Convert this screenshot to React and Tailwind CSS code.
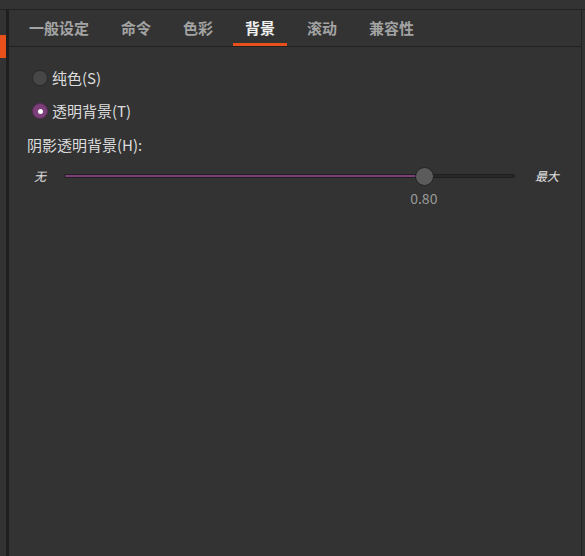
import React from 'react';

const tabs = ['一般设定', '命令', '色彩', '背景', '滚动', '兼容性'];

function Radio({ checked, label }) {
    return (
        <div className="flex items-center h-[20px] pl-[23px] gap-[4px]">
            {checked ? (
                <span className="w-[16px] h-[16px] rounded-full bg-[#7d3f7a] border border-[#5a2d58] flex items-center justify-center">
                    <span className="w-[5px] h-[5px] rounded-full bg-white"></span>
                </span>
            ) : (
                <span className="w-[16px] h-[16px] rounded-full bg-[#474747] border border-[#2a2a2a]"></span>
            )}
            <span className="text-[15px] text-[#dcdcdc]">{label}</span>
        </div>
    );
}

function Slider({ value }) {
    const pct = value * 100;
    return (
        <div className="flex flex-col">
            <div className="flex items-center h-[20px]">
                <span className="w-[55px] pl-[25px] text-[12px] italic text-[#e0e0e0]">无</span>
                <div className="relative w-[451px] h-[20px] flex items-center">
                    <div className="w-full h-[4px] rounded-full bg-[#272727] border border-[#1f1f1f] flex">
                        <div className="h-full rounded-full bg-[#7d3f7a]" style={{ width: `${pct}%` }}></div>
                    </div>
                    <div
                        className="absolute top-[1px] w-[19px] h-[19px] -ml-[10px] rounded-full bg-[#5b5b5b] border border-[#242424]"
                        style={{ left: `${pct}%` }}
                    ></div>
                </div>
                <span className="pl-[20px] text-[12px] italic text-[#e0e0e0]">最大</span>
            </div>
            <div className="relative ml-[55px] w-[451px] h-[26px]">
                <span
                    className="absolute top-[2px] -ml-[1px] -translate-x-1/2 text-[14px] text-[#9a9a9a]"
                    style={{ left: `${pct}%` }}
                >
                    {value.toFixed(2)}
                </span>
            </div>
        </div>
    );
}

export default function App() {
    return (
        <div
            className="w-[585px] h-[556px] bg-[#333333] flex flex-col overflow-hidden"
            style={{ fontFamily: '"Noto Sans CJK SC", "Noto Sans", sans-serif' }}
        >
            <div className="h-[9px] shrink-0"></div>
            <div className="flex flex-1 border-t border-[#222222]">
                {/* left strip */}
                <div className="w-[6px] shrink-0 pt-[25px]">
                    <div className="h-[23px] bg-[#e8501c]"></div>
                </div>
                <div className="w-[3px] shrink-0 bg-[#1f1f1f]"></div>

                {/* main panel */}
                <div className="w-[573px] flex flex-col border-r border-[#222222]">
                    <div className="flex h-[37px] border-b border-[#222222] pl-2 gap-[8px]">
                        {tabs.map((t) => (
                            <div
                                key={t}
                                className={
                                    t === '背景'
                                        ? 'px-[12px] pt-[7px] text-[15px] font-bold text-[#f0f0f0] border-b-[3px] border-[#e8501c]'
                                        : 'px-[12px] pt-[7px] text-[15px] font-bold text-[#a3a3a3]'
                                }
                            >
                                {t}
                            </div>
                        ))}
                    </div>

                    <div className="flex flex-col pt-[21px]">
                        <Radio label="纯色(S)" />
                        <div className="h-[13px]"></div>
                        <Radio checked label="透明背景(T)" />
                        <div className="h-[14px] "></div>
                        <div className="h-[20px] flex items-center pl-[18px] text-[15px] text-[#dcdcdc]">
                            阴影透明背景(H):
                        </div>
                        <div className="h-[11px]"></div>
                        <Slider value={0.8} />
                    </div>
                </div>
            </div>
        </div>
    );
}
